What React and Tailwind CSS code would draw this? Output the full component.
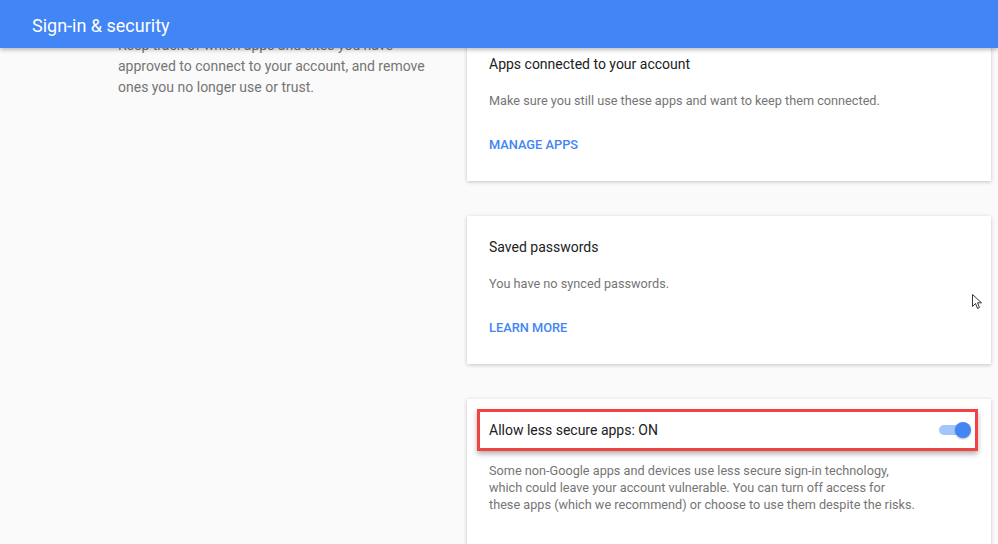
import React from "react";

function Card({ title, desc, link }) {
  return (
    <div className="bg-white shadow-[0_1px_4px_rgba(0,0,0,0.22)] px-[22px] pt-[21px] pb-[26px]">
      <div className="text-[14px] leading-[20px] text-[#212121]">{title}</div>
      <div className="mt-[17px] text-[12.7px] leading-[20px] text-[#757575]">{desc}</div>
      <div className="mt-[24px] text-[12.8px] leading-[20px] font-medium text-[#4285f4] uppercase">{link}</div>
    </div>
  );
}

export default function App() {
  return (
    <div
      className="relative w-[998px] h-[544px] overflow-hidden bg-[#fafafa]"
      style={{ fontFamily: "Roboto, 'Noto Sans', Arial, sans-serif" }}
    >
      <div className="absolute top-0 left-0 right-0 h-[48px] z-10 bg-[#4285f4] shadow-[0_2px_4px_rgba(0,0,0,0.25)] flex items-center pl-[32px]">
        <span className="text-white text-[18px] leading-none pt-[3px]">Sign-in &amp; security</span>
      </div>

      <div className="flex pt-[33px]">
        <div className="w-[467px] pl-[118px] shrink-0">
          <p className="text-[14px] leading-[21px] text-[#757575] pt-[2px]">
            Keep track of which apps and sites you have
            <br />
            approved to connect to your account, and remove
            <br />
            ones you no longer use or trust.
          </p>
        </div>
        <div className="w-[524px] flex flex-col gap-[35px]">
          <Card
            title="Apps connected to your account"
            desc="Make sure you still use these apps and want to keep them connected."
            link="Manage apps"
          />
          <Card
            title="Saved passwords"
            desc="You have no synced passwords."
            link="Learn more"
          />
          <div className="bg-white shadow-[0_1px_4px_rgba(0,0,0,0.22)] pt-[10px] pl-[10px] pr-[13px] pb-[60px]">
            <div className="h-[42px] border-[3px] border-[#ee4444] shadow-[0_3px_5px_rgba(0,0,0,0.3)] flex items-center justify-between pl-[9px] pr-[4px]">
              <span className="text-[14px] leading-[20px] text-[#212121]">Allow less secure apps: ON</span>
              <div className="relative w-[32px] h-[16px] flex items-center">
                <div className="w-[26px] h-[10px] rounded-full bg-[#a4c5fb]"></div>
                <div className="absolute right-0 top-0 w-[16px] h-[16px] rounded-full bg-[#4285f4] shadow-[0_1px_2px_rgba(0,0,0,0.3)]"></div>
              </div>
            </div>
            <p className="mt-[11px] pl-[12px] text-[12.7px] leading-[17px] text-[#757575]">
              Some non-Google apps and devices use less secure sign-in technology,
              <br />
              which could leave your account vulnerable. You can turn off access for
              <br />
              these apps (which we recommend) or choose to use them despite the risks.
            </p>
          </div>
        </div>
      </div>

      <svg
        className="absolute left-[972px] top-[294px] z-20"
        width="11"
        height="16"
        viewBox="0 0 11 16"
      >
        <path
          d="M0.5 0.5 L0.5 12.5 L3.5 9.5 L5.5 14.5 L7.5 13.5 L5.5 8.8 L9.5 8.8 Z"
          fill="white"
          stroke="#333"
          strokeWidth="1"
          strokeLinejoin="round"
        />
      </svg>
    </div>
  );
}
